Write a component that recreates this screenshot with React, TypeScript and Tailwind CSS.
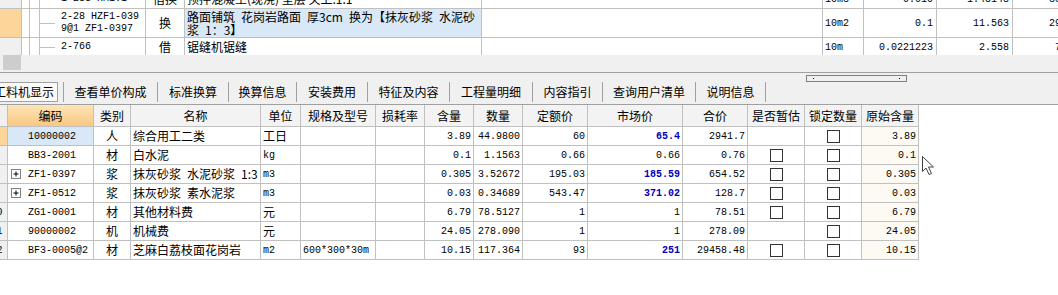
import React from "react";

const cn = "font-['Noto_Sans_CJK_SC',sans-serif] text-[12px]";
const mono = "font-['Liberation_Mono','Noto_Sans_CJK_SC',monospace] text-[10px]";
const line = "border-r border-b border-[#c0c0c0]";

const isAscii = (s: string) => /^[\x00-\x7F]*$/.test(s);

type Row = {
  n: string;
  code: string;
  plus?: boolean;
  type: string;
  name: string;
  unit: string;
  spec?: string;
  qty: string;
  num: string;
  quota: string;
  market: string;
  blue?: boolean;
  total: string;
  est: boolean;
  orig: string;
};

const ROWS: Row[] = [
  { n: "6", code: "10000002", type: "人", name: "综合用工二类", unit: "工日", qty: "3.89", num: "44.9800", quota: "60", market: "65.4", blue: true, total: "2941.7", est: false, orig: "3.89" },
  { n: "7", code: "BB3-2001", type: "材", name: "白水泥", unit: "kg", qty: "0.1", num: "1.1563", quota: "0.66", market: "0.66", total: "0.76", est: true, orig: "0.1" },
  { n: "8", code: "ZF1-0397", plus: true, type: "浆", name: "抹灰砂浆\u2002水泥砂浆\u20021:3", unit: "m3", qty: "0.305", num: "3.52672", quota: "195.03", market: "185.59", blue: true, total: "654.52", est: true, orig: "0.305" },
  { n: "9", code: "ZF1-0512", plus: true, type: "浆", name: "抹灰砂浆\u2002素水泥浆", unit: "m3", qty: "0.03", num: "0.34689", quota: "543.47", market: "371.02", blue: true, total: "128.7", est: true, orig: "0.03" },
  { n: "10", code: "ZG1-0001", type: "材", name: "其他材料费", unit: "元", qty: "6.79", num: "78.5127", quota: "1", market: "1", total: "78.51", est: true, orig: "6.79" },
  { n: "11", code: "90000002", type: "机", name: "机械费", unit: "元", qty: "24.05", num: "278.090", quota: "1", market: "1", total: "278.09", est: false, orig: "24.05" },
  { n: "12", code: "BF3-0005@2", type: "材", name: "芝麻白荔枝面花岗岩", unit: "m2", spec: "600*300*30m", qty: "10.15", num: "117.364", quota: "93", market: "251", blue: true, total: "29458.48", est: true, orig: "10.15" },
];

const HEADERS = ["编码", "类别", "名称", "单位", "规格及型号", "损耗率", "含量", "数量", "定额价", "市场价", "合价", "是否暂估", "锁定数量", "原始含量"];

const TABS = [
  { label: "查看单价构成", w: "w-[93px]" },
  { label: "标准换算", w: "w-[70px]" },
  { label: "换算信息", w: "w-[67px]" },
  { label: "安装费用", w: "w-[70px]" },
  { label: "特征及内容", w: "w-[81px]" },
  { label: "工程量明细", w: "w-[82px]" },
  { label: "内容指引", w: "w-[69px]" },
  { label: "查询用户清单", w: "w-[92px]" },
  { label: "说明信息", w: "w-[69px]" },
];

function Check() {
  return <span className="block w-[13px] h-[13px] border border-[#333] bg-white" />;
}

function PlusBox() {
  return (
    <svg width="10" height="10" viewBox="0 0 10 10" className="shrink-0">
      <rect x="0.5" y="0.5" width="9" height="9" fill="white" stroke="#808080" />
      <path d="M2.5 5H7.5M5 2.5V7.5" stroke="#000" />
    </svg>
  );
}

function TreeCell({ children, h }: { children: React.ReactNode; h: string }) {
  return (
    <div className={`${line} ${h} flex items-stretch bg-white overflow-hidden`}>
      <div className="w-[9px] shrink-0" />
      <div className="w-px shrink-0 bg-[#c0c0c0]" />
      <div className="w-[15px] shrink-0 flex items-center">
        <div className="h-px w-full bg-[#c0c0c0]" />
      </div>
      <div className={`${mono} ml-[6px] flex flex-col justify-center leading-[12px] whitespace-nowrap`}>{children}</div>
    </div>
  );
}

function TopGrid() {
  const num = `${line} ${mono} flex items-center justify-end pr-[3px] whitespace-nowrap overflow-hidden bg-white`;
  const txt = `${line} flex items-center pl-[2px] whitespace-nowrap overflow-hidden`;
  return (
    <div className="h-[55px] overflow-hidden">
      <div className="-mt-[10px] grid w-[1089px] grid-cols-[22px_8px_116px_39px_297px_341px_41px_73px_76px_76px]">
        {/* row 1 (cut off) */}
        <div className={`${line} h-[19px] bg-[#f0f0f0]`} />
        <div className={`${line} h-[19px] bg-white`} />
        <TreeCell h="h-[19px]">1-288 HM1:1</TreeCell>
        <div className={`${line} ${cn} h-[19px] flex items-center justify-center bg-white`}>借换</div>
        <div className={`${txt} ${cn} h-[19px] bg-white`}>预拌混凝土(现浇) 垫层 关上:1:1</div>
        <div className={`${line} h-[19px] bg-white`} />
        <div className={`${txt} ${mono} h-[19px] bg-white`}>10m3</div>
        <div className={`${num} h-[19px]`}>0.010</div>
        <div className={`${num} h-[19px]`}>1.45148</div>
        <div className={`${num} h-[19px]`}>330.60</div>

        {/* row 2 (selected) */}
        <div className={`${line} h-[29px] bg-[#fdd59b]`} />
        <div className={`${line} h-[29px] bg-white`} />
        <TreeCell h="h-[29px]">
          <span>2-28 HZF1-039</span>
          <span>9@1 ZF1-0397</span>
        </TreeCell>
        <div className={`${line} ${cn} h-[29px] flex items-center justify-center bg-white`}>换</div>
        <div className={`${line} ${cn} h-[29px] pl-[2px] flex flex-col justify-center leading-[13px] whitespace-nowrap overflow-hidden bg-[#d9e8f7]`}>
          <span>路面铺筑&ensp;花岗岩路面&ensp;厚3cm&ensp;换为【抹灰砂浆&ensp;水泥砂</span>
          <span>浆&ensp;1：3】</span>
        </div>
        <div className={`${line} h-[29px] bg-white`} />
        <div className={`${txt} ${mono} h-[29px] bg-white`}>10m2</div>
        <div className={`${num} h-[29px]`}>0.1</div>
        <div className={`${num} h-[29px]`}>11.563</div>
        <div className={`${num} h-[29px]`}>298.05</div>

        {/* row 3 */}
        <div className={`${line} h-[19px] bg-[#f0f0f0]`} />
        <div className={`${line} h-[19px] bg-white`} />
        <TreeCell h="h-[19px]">2-766</TreeCell>
        <div className={`${line} ${cn} h-[19px] flex items-center justify-center bg-white`}>借</div>
        <div className={`${txt} ${cn} h-[19px] bg-white`}>锯缝机锯缝</div>
        <div className={`${line} h-[19px] bg-white`} />
        <div className={`${txt} ${mono} h-[19px] bg-white`}>10m</div>
        <div className={`${num} h-[19px]`}>0.0221223</div>
        <div className={`${num} h-[19px]`}>2.558</div>
        <div className={`${num} h-[19px]`}>73.26</div>
      </div>
    </div>
  );
}

function TabPanel() {
  return (
    <div className="h-[32px] border-b border-[#a0a0a0] bg-[#f0f0f0]">
      <div className="h-[9px] pt-[2px] pl-[806px]">
        <div className="w-[101px] h-[7px] border border-[#808080] bg-[#f0f0f0] flex items-center justify-between px-[6px]">
          <span className="block w-px h-px bg-[#000080]" />
          <span className="block w-px h-px bg-[#000080]" />
        </div>
      </div>
      <div className={`${cn} h-[20px] flex items-stretch -ml-[10px]`}>
        <div className="w-[68px] border border-[#a0a0a0] bg-[#fafafa] flex items-center justify-center whitespace-nowrap">工料机显示</div>
        <div className="w-[5px]" />
        <div className="w-px bg-[#a0a0a0]" />
        {TABS.map((t) => (
          <React.Fragment key={t.label}>
            <div className={`${t.w} flex items-center justify-center whitespace-nowrap`}>{t.label}</div>
            <div className="w-px bg-[#a0a0a0]" />
          </React.Fragment>
        ))}
      </div>
    </div>
  );
}

function BottomGrid() {
  const head = `${line} ${cn} h-[22px] flex items-center justify-center whitespace-nowrap overflow-hidden`;
  const cell = `${line} h-[19px] flex items-center whitespace-nowrap overflow-hidden`;
  const num = `${cell} ${mono} justify-end pr-[2px]`;
  const auto = (s: string) => (isAscii(s) ? mono : cn);
  return (
    <div className="grid w-[919px] grid-cols-[8px_86px_37px_130px_40px_75px_49px_49px_49px_65px_95px_65px_57px_57px_57px]">
      <div className={`${line} h-[22px] bg-[#f0f0f0]`} />
      {HEADERS.map((h) => (
        <div
          key={h}
          className={`${head} ${h === "编码" ? "bg-gradient-to-b from-[#fee4b6] to-[#f9c883]" : "bg-[#f3f3f3]"}`}
        >
          {h}
        </div>
      ))}
      {ROWS.map((r, i) => (
        <React.Fragment key={r.n}>
          {/* row number column is mostly scrolled out of view */}
          <div className={`${cell} ${mono} ${i === 0 ? "bg-[#fdd59b]" : "bg-[#f0f0f0]"}`}>
            <div className="-ml-[14px] w-[21px] shrink-0 text-center">{r.n}</div>
          </div>
          <div className={`${cell} ${mono} ${i === 0 ? "bg-[#d9e8f7]" : "bg-white"}`}>
            <div className="w-[3px] shrink-0" />
            <div className="w-[10px] shrink-0">{r.plus && <PlusBox />}</div>
            <div className="w-[7px] shrink-0" />
            {r.code}
          </div>
          <div className={`${cell} ${cn} justify-center bg-white`}>{r.type}</div>
          <div className={`${cell} ${cn} pl-[2px] bg-white`}>{r.name}</div>
          <div className={`${cell} ${auto(r.unit)} pl-[2px] bg-white`}>{r.unit}</div>
          <div className={`${cell} ${mono} pl-[2px] bg-white`}>{r.spec ?? ""}</div>
          <div className={`${cell} bg-white`} />
          <div className={`${num} bg-white`}>{r.qty}</div>
          <div className={`${num} bg-white`}>{r.num}</div>
          <div className={`${num} bg-white`}>{r.quota}</div>
          <div className={`${num} bg-white ${r.blue ? "text-[#0000c0] font-bold" : ""}`}>{r.market}</div>
          <div className={`${num} bg-white`}>{r.total}</div>
          <div className={`${cell} justify-center bg-white`}>{r.est && <Check />}</div>
          <div className={`${cell} justify-center bg-white`}>
            <Check />
          </div>
          <div className={`${num} bg-[#fdfaf4]`}>{r.orig}</div>
        </React.Fragment>
      ))}
    </div>
  );
}

function Cursor() {
  return (
    <svg width="14" height="21" viewBox="0 0 14 21" className="absolute left-[921px] top-[155px]">
      <path
        d="M1.5 1.5V16.5L5 13L8 19.5L10.5 18.5L7.5 12H12.5Z"
        fill="white"
        stroke="#404040"
        strokeLinejoin="round"
      />
    </svg>
  );
}

export default function App() {
  return (
    <div className="relative w-[1058px] h-[295px] overflow-hidden bg-white text-black">
      <TopGrid />
      <div className="h-[18px] border-b border-[#a0a0a0] bg-[#f0f0f0] pl-[3px]">
        <div className="h-[15px] w-[18px] bg-[#cdcdcd]" />
      </div>
      <TabPanel />
      <BottomGrid />
      <Cursor />
    </div>
  );
}
